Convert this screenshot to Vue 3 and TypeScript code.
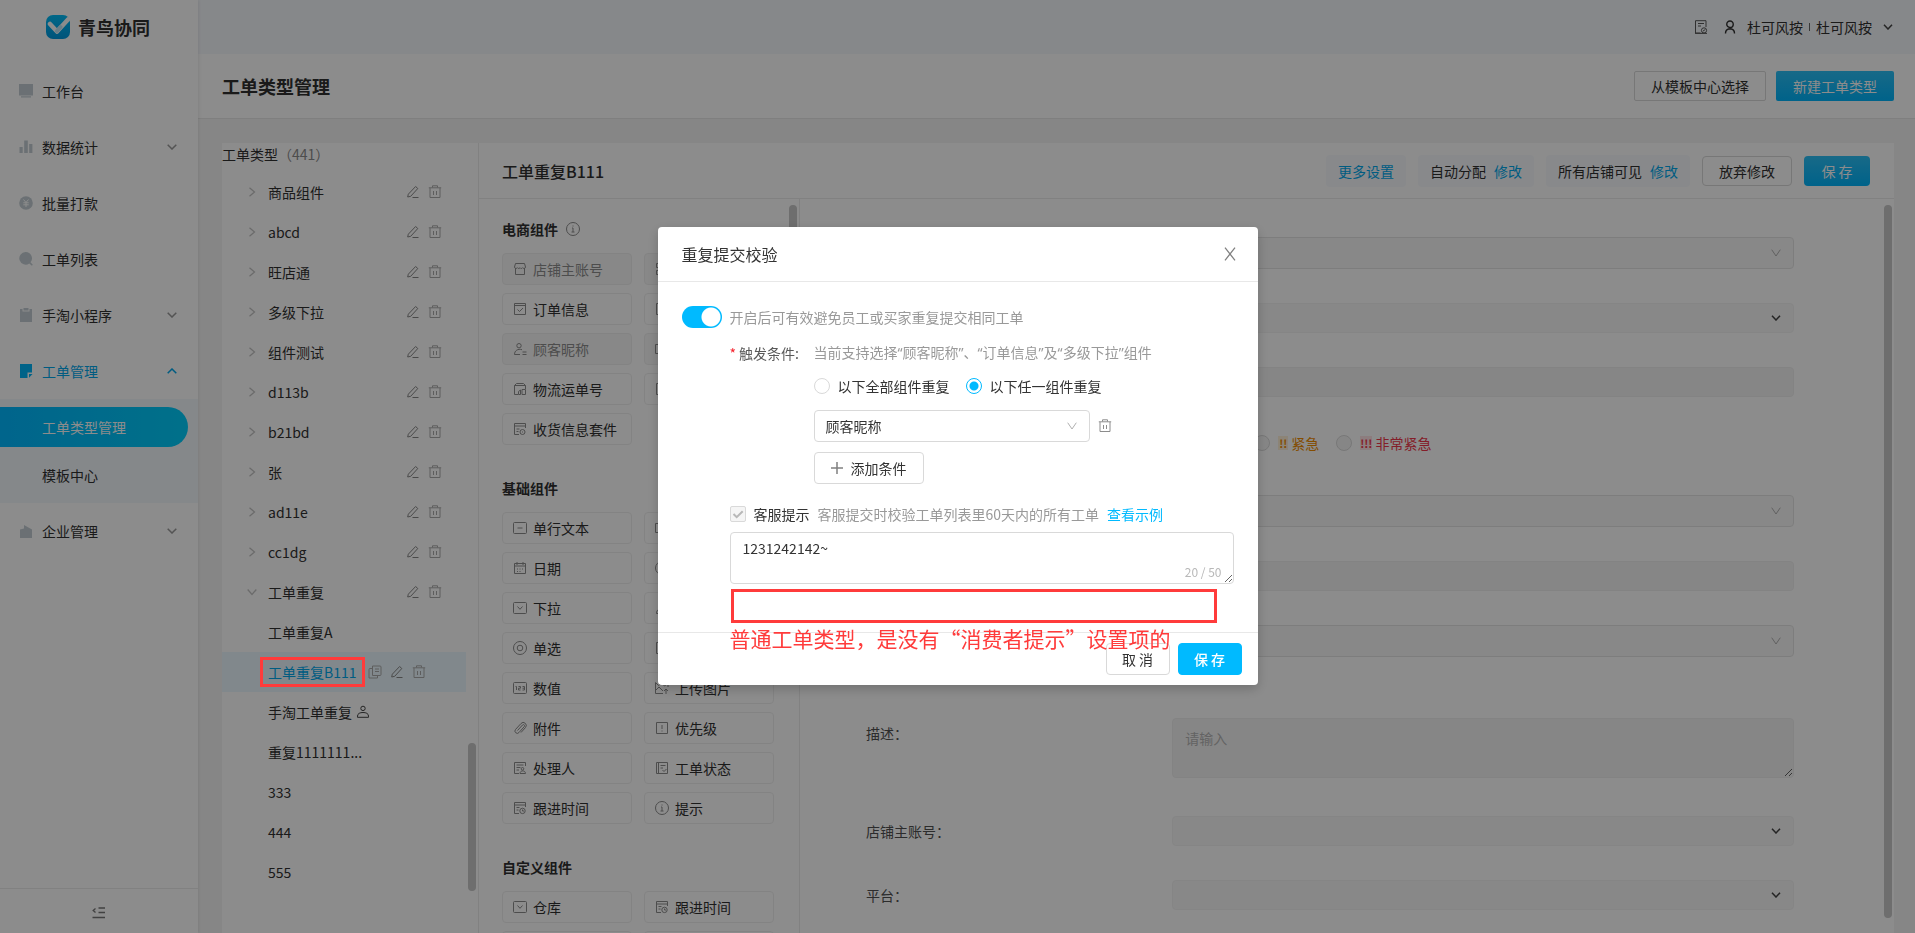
<script setup lang="ts">
import { ref } from 'vue'

interface MenuItem { label: string; icon: string; arrow?: 'down' | 'up'; active?: boolean }
interface TreeRow { label: string; child?: boolean; open?: boolean; selected?: boolean; user?: boolean }
interface Piece { label: string; icon: string; off?: boolean }
interface Group { title: string; info?: boolean; items: Piece[] }
interface Field { label: string; kind: 'select' | 'pick' | 'input' | 'radio' | 'area' }

const menuTop: MenuItem[] = [
  { label: '工作台', icon: 'desk' },
  { label: '数据统计', icon: 'bars', arrow: 'down' },
  { label: '批量打款', icon: 'yen' },
  { label: '工单列表', icon: 'find' },
  { label: '手淘小程序', icon: 'clip', arrow: 'down' },
  { label: '工单管理', icon: 'note', arrow: 'up', active: true },
]

const tree: TreeRow[] = [
  { label: '商品组件' }, { label: 'abcd' }, { label: '旺店通' }, { label: '多级下拉' },
  { label: '组件测试' }, { label: 'd113b' }, { label: 'b21bd' }, { label: '张' },
  { label: 'ad11e' }, { label: 'cc1dg' }, { label: '工单重复', open: true },
  { label: '工单重复A', child: true },
  { label: '工单重复B111', child: true, selected: true },
  { label: '手淘工单重复', child: true, user: true },
  { label: '重复1111111...', child: true },
  { label: '333', child: true }, { label: '444', child: true }, { label: '555', child: true },
]

const groups: Group[] = [
  {
    title: '电商组件', info: true,
    items: [
      { label: '店铺主账号', icon: 'shop', off: true }, { label: '', icon: 'grid', off: true },
      { label: '订单信息', icon: 'order' }, { label: '', icon: 'box' },
      { label: '顾客昵称', icon: 'guest', off: true }, { label: '', icon: 'wide', off: true },
      { label: '物流运单号', icon: 'truck' }, { label: '', icon: 'box' },
      { label: '收货信息套件', icon: 'receive' },
    ],
  },
  {
    title: '基础组件',
    items: [
      { label: '单行文本', icon: 'line' }, { label: '', icon: 'wide' },
      { label: '日期', icon: 'date' }, { label: '', icon: 'radio' },
      { label: '下拉', icon: 'drop' }, { label: '', icon: 'guest' },
      { label: '单选', icon: 'radio' }, { label: '', icon: 'box' },
      { label: '数值', icon: 'num' }, { label: '上传图片', icon: 'image' },
      { label: '附件', icon: 'attach' }, { label: '优先级', icon: 'bang' },
      { label: '处理人', icon: 'handler' }, { label: '工单状态', icon: 'status' },
      { label: '跟进时间', icon: 'follow' }, { label: '提示', icon: 'info' },
    ],
  },
  {
    title: '自定义组件',
    items: [
      { label: '仓库', icon: 'drop' }, { label: '跟进时间', icon: 'follow' },
      { label: '', icon: 'line' }, { label: '', icon: 'line' },
    ],
  },
]

const icons: Record<string, string> = {
  shop: 'M2.500 6v6.500h9V6M2.500 1.500h9l1 3.500a1.500 1.500 0 0 1-2.800.700 1.600 1.600 0 0 1-2.700 0 1.600 1.600 0 0 1-2.700 0A1.500 1.500 0 0 1 1.500 5z',
  grid: 'M1.500 1.500h4v4h-4zM8.500 1.500h4v4h-4zM1.500 8.500h4v4h-4zM8.500 8.500h4v4h-4z',
  box: 'M1.500 1.500h11v11h-11z',
  wide: 'M.5 2.500h13v9H.5z',
  order: 'M1.500 1.500h11v11h-11zM1.500 3.500h11M4.500 7.500l2 2 3.500-3.500',
  guest: 'M6 1.500a2.200 2.200 0 1 1 0 4.400 2.200 2.200 0 0 1 0-4.400zM9 7.700C5 6.500 1.500 8.500 1.500 12.500H7M9.500 10h4M9.500 12.500h4',
  truck: 'M5 12.500H1.500V3.500l2-2h7l2 2V7M1.500 3.500h11M7.500 12.500H5.500V9.500l2-1.500v4.500M9 12.500V7.500h3.500v5z',
  receive: 'M6 12.500H1.500v-11h11V6M1.500 4h11M3.500 7h3M3.500 9.500h2M9.500 7.500a2.500 2.500 0 1 1 0 5 2.500 2.500 0 0 1 0-5zM9.500 9.500v1',
  line: 'M1.500 1.500h11a1 1 0 0 1 1 1v9a1 1 0 0 1-1 1h-11a1 1 0 0 1-1-1v-9a1 1 0 0 1 1-1zM4.500 7h5',
  date: 'M1.500 2.500h11v10h-11zM1.500 5h11M4 1v3M10 1v3M4 8h1M6.500 8h1M9 8h1M4 10.500h1M6.500 10.500h1',
  drop: 'M1.500 1.500h11a1 1 0 0 1 1 1v9a1 1 0 0 1-1 1h-11a1 1 0 0 1-1-1v-9a1 1 0 0 1 1-1zM4.500 5.500L7 8.300 9.500 5.500',
  radio: 'M7 .5a6.500 6.500 0 1 1 0 13 6.500 6.500 0 0 1 0-13zM7 4.200a2.800 2.800 0 1 1 0 5.600 2.800 2.800 0 0 1 0-5.600z',
  num: 'M1.500 1.500h11a1 1 0 0 1 1 1v9a1 1 0 0 1-1 1h-11a1 1 0 0 1-1-1v-9a1 1 0 0 1 1-1zM2.500 5.500h1v3.500M5.500 5.500h2v1.700h-2V9h2M9.500 5.500h2V9h-2M9.500 7.200h2',
  image: 'M8 12.500H.5v-11l3 3 3-2.500 3 3 3.500-3V6M.5 9.500L4 6l4 4M11 13V8M9 10l2-2 2 2',
  attach: 'M4.500 9.500l5-5.500a1.200 1.200 0 0 1 1.800 1.600L6 11.500a2.300 2.300 0 0 1-3.500-3L8 2.500a3 3 0 0 1 4.500 4L8 11.500',
  bang: 'M1.500 1.500h11v11h-11zM7 4v4M7 9.500v1',
  handler: 'M6 12.500H1.500v-11h11V5M3.500 4h7M3.500 6.500h4M3.500 9h2.500M9.500 6.500a1.300 1.300 0 1 1 0 2.600 1.300 1.300 0 0 1 0-2.600zM7 12.500c0-3.500 5.500-3.500 5.500 0z',
  status: 'M1.500 1.500h11v11h-11zM3.500 1.500v11M5.500 4.500h5M5.500 7h2.500M7.500 9l1.500 1.500L11.500 8',
  follow: 'M6 12.500H1.500v-11h11V6M1.500 4h11M3.500 6.500h3M3.500 9h2M9.500 7.200a2.700 2.700 0 1 1 0 5.400 2.700 2.700 0 0 1 0-5.400zM9.500 8.500V10h1.500',
  info: 'M7 .5a6.500 6.500 0 1 1 0 13 6.500 6.500 0 0 1 0-13zM7 3.500v1M6 6h1v4M5.500 10h3',
  edit: 'M2.300 9.200L9.600 1.500l2.200 2L4.700 11.300l-3 .7zM6.500 12.500h6',
  trash: 'M.8 2.800h12.400M4.500 2.500V.8h5v1.700M2 3v9.500h10V3M5.500 6v4M8.500 6v4',
  copy: 'M4.500 1h7.500a1 1 0 0 1 1 1v7.500a1 1 0 0 1-1 1H4.500zM4.500 3.500H2a1 1 0 0 0-1 1V13h8.500v-2.500M7 4h4M7 6.500h4',
  user: 'M7 1.200a2.200 2.200 0 1 1 0 4.400 2.200 2.200 0 0 1 0-4.400zM1.500 12.300v-1.200C1.500 8.500 4 7.500 7 7.500s5.500 1 5.500 3.600v1.200z',
}

const fields: Field[] = [
  { label: '', kind: 'select' },
  { label: '', kind: 'pick' },
  { label: '', kind: 'input' },
  { label: '', kind: 'radio' },
  { label: '', kind: 'select' },
  { label: '', kind: 'input' },
  { label: '', kind: 'select' },
  { label: '描述', kind: 'area' },
  { label: '店铺主账号', kind: 'pick' },
  { label: '平台', kind: 'pick' },
]

const enabled = ref(true)
const mode = ref('any')
const tip = ref('1231242142~')
</script>

<template>
  <div class="page">
    <aside class="side">
      <div class="logo">
        <svg width="24" height="24" viewBox="0 0 24 24">
          <defs>
            <linearGradient id="lg" x1="0" y1="0" x2="0" y2="1">
              <stop offset="0" stop-color="#00bdf7" /><stop offset="1" stop-color="#0099df" />
            </linearGradient>
          </defs>
          <rect width="24" height="24" rx="7" fill="url(#lg)" />
          <path d="M4 9l7 7.500L22 4.500" fill="none" stroke="#fff" stroke-width="4.500" stroke-linecap="round" stroke-linejoin="round" />
          <path d="M11 16l3.500-4" stroke="#bfe6f8" stroke-width="4" stroke-linecap="round" />
        </svg>
        <strong>青鸟协同</strong>
      </div>
      <nav class="menu">
        <a v-for="m in menuTop" :key="m.label" href="#" class="item" :class="{ on: m.active }">
          <svg class="mico" viewBox="0 0 14 14">
            <path v-if="m.icon === 'desk'" d="M0 0h14v11.500H0zM2 12.200h10v1.300H2z" />
            <path v-else-if="m.icon === 'bars'" d="M.5 7h3.200v6H.5zM5.200.5h3.600V13H5.200zM10.200 4h3.200v9h-3.200z" />
            <g v-else-if="m.icon === 'yen'">
              <circle cx="7" cy="7" r="6.800" />
              <path d="M4.500 3.500L7 6.500l2.500-3M4.300 6.800h5.400M4.300 8.800h5.400M7 6.500v4.500" class="cut" />
            </g>
            <path v-else-if="m.icon === 'find'" d="M6.500 0a6.300 6.300 0 0 1 5 10.300l2.300 2.500-.9.900-2.600-2.300A6.300 6.300 0 1 1 6.500 0z" />
            <path v-else-if="m.icon === 'clip'" d="M1 1h2.500v2.500h7V1H13v13H1zM4.500 0h5v2.500h-5z" />
            <path v-else d="M1 0h12v8.500H8.500V14H1zM10 10h3.500L10 13.800z" />
          </svg>
          <span>{{ m.label }}</span>
          <svg v-if="m.arrow" class="arrow" viewBox="0 0 10 6">
            <path :d="m.arrow === 'down' ? 'M.7.7L5 5 9.300.7' : 'M.7 5.300L5 1l4.300 4.300'" />
          </svg>
        </a>
        <div class="sub">
          <a href="#" class="leaf cur">工单类型管理</a>
          <a href="#" class="leaf">模板中心</a>
        </div>
        <a href="#" class="item">
          <svg class="mico" viewBox="0 0 14 14"><path d="M1 5.500l4-1V1l8 4.500V14H1z" /></svg>
          <span>企业管理</span>
          <svg class="arrow" viewBox="0 0 10 6"><path d="M.7.7L5 5 9.300.7" /></svg>
        </a>
      </nav>
      <button class="fold" aria-label="收起">
        <svg width="14" height="12" viewBox="0 0 14 12"><path d="M6.500 1H13M6.500 5.500H13M.5 10.500H13M3.500 1.500L1.200 3.500l2.300 2" /></svg>
      </button>
    </aside>

    <div class="main">
      <header class="top">
        <svg class="line-ico" width="14" height="14" viewBox="0 0 14 14">
          <path d="M6.500 13H1.500V.7h10.500V7M4 3.500h6M4 6h3M10 7.800a2.600 2.600 0 1 1 0 5.200 2.600 2.600 0 0 1 0-5.200zM8.800 11.200L11.300 9.500M1 13.400h12" />
        </svg>
        <svg class="line-ico dark" width="12" height="14" viewBox="0 0 12 14">
          <path d="M6 1a3.200 3.200 0 1 1 0 6.500A3.200 3.200 0 0 1 6 1zM1.500 13.500C1.500 11 2.500 9.500 4.500 9h3c2 .5 3 2 3 4.500" />
        </svg>
        <span class="who">杜可风按<i></i>杜可风按</span>
        <svg class="arrow dark" viewBox="0 0 10 6"><path d="M1 .7L5 5 9 .7" /></svg>
      </header>

      <div class="bar">
        <h1>工单类型管理</h1>
        <button class="btn sq">从模板中心选择</button>
        <button class="btn blue sq">新建工单类型</button>
      </div>

      <div class="body">
        <section class="types">
          <h2>工单类型<span>（441）</span></h2>
          <ul>
            <li v-for="t in tree" :key="t.label" :class="{ sel: t.selected }">
              <svg v-if="!t.child" class="tri" :class="{ open: t.open }" viewBox="0 0 10 10"><path d="M2.500.7L7.500 5 2.500 9.300" /></svg>
              <span class="name">{{ t.label }}<i v-if="t.selected" class="mark"></i></span>
              <svg v-if="t.user" class="ico who-ico" viewBox="0 0 14 14"><path :d="icons.user" /></svg>
              <span v-if="!t.child || t.selected" class="acts">
                <svg v-if="t.selected" class="ico" viewBox="0 0 14 14"><path :d="icons.copy" /></svg>
                <svg class="ico pen" viewBox="0 0 14 14"><path :d="icons.edit" /></svg>
                <svg class="ico" viewBox="0 0 14 14"><path :d="icons.trash" /></svg>
              </span>
            </li>
          </ul>
          <i class="thumb t1"></i>
        </section>

        <section class="work">
          <div class="whead">
            <h2>工单重复B111</h2>
            <span class="tag"><a href="#">更多设置</a></span>
            <span class="tag">自动分配<a href="#">修改</a></span>
            <span class="tag">所有店铺可见<a href="#">修改</a></span>
            <button class="btn">放弃修改</button>
            <button class="btn blue wide">保 存</button>
          </div>
          <div class="cols">
            <div class="parts">
              <div v-for="g in groups" :key="g.title" class="group">
                <h3>{{ g.title }}<svg v-if="g.info" class="ico" viewBox="0 0 14 14"><path :d="icons.info" /></svg></h3>
                <div class="tiles">
                  <button v-for="(p, i) in g.items" :key="i" class="tile" :class="{ off: p.off }">
                    <svg class="ico" viewBox="0 0 14 14"><path :d="icons[p.icon]" /></svg>{{ p.label }}
                  </button>
                </div>
              </div>
              <i class="thumb t2"></i>
            </div>
            <form class="form" @submit.prevent>
              <div v-for="(f, i) in fields" :key="i" class="frow" :class="f.kind">
                <label :for="'f' + i"><template v-if="f.label">{{ f.label }}：</template></label>
                <div v-if="f.kind === 'select' || f.kind === 'pick'" class="pickbox">
                  <select :id="'f' + i" disabled></select>
                  <svg v-if="f.kind === 'select'" class="v" viewBox="0 0 10 8"><path d="M.7.7L5 7 9.300.7" /></svg>
                  <svg v-else class="arrow dark" viewBox="0 0 10 6"><path d="M1 .7L5 5 9 .7" /></svg>
                </div>
                <input v-else-if="f.kind === 'input'" :id="'f' + i" type="text" disabled>
                <textarea v-else-if="f.kind === 'area'" :id="'f' + i" placeholder="请输入" disabled></textarea>
                <div v-else class="levels">
                  <label><input type="radio" name="lv" disabled><span><b>!</b>普通</span></label>
                  <label class="warn"><input type="radio" name="lv" disabled><span><b>!!</b>紧急</span></label>
                  <label class="hot"><input type="radio" name="lv" disabled><span><b>!!!</b>非常紧急</span></label>
                </div>
              </div>
              <i class="thumb t3"></i>
            </form>
          </div>
        </section>
      </div>
    </div>

    <div class="mask">
      <div class="modal" role="dialog" aria-labelledby="mt">
        <div class="mhead">
          <h2 id="mt">重复提交校验</h2>
          <button class="close" aria-label="关闭">
            <svg width="12" height="14" viewBox="0 0 12 14"><path d="M1 .7l10 12.600M11 .7L1 13.300" /></svg>
          </button>
        </div>
        <div class="mbody">
          <label class="switch">
            <input v-model="enabled" type="checkbox" role="switch"><span>开启后可有效避免员工或买家重复提交相同工单</span>
          </label>
          <div class="inner">
            <div class="cond">
              <span class="req">触发条件:</span>
              <div>
                <p class="hint">当前支持选择“顾客昵称”、“订单信息”及“多级下拉”组件</p>
                <div class="radios">
                  <label><input v-model="mode" type="radio" value="all">以下全部组件重复</label>
                  <label><input v-model="mode" type="radio" value="any">以下任一组件重复</label>
                </div>
                <div class="choose">
                  <div class="pickbox">
                    <select aria-label="触发条件"><option>顾客昵称</option></select>
                    <svg class="v" viewBox="0 0 10 8"><path d="M.7.7L5 7 9.300.7" /></svg>
                  </div>
                  <svg class="ico" viewBox="0 0 14 14"><path :d="icons.trash" /></svg>
                </div>
                <button class="btn add">
                  <svg width="12" height="12" viewBox="0 0 12 12"><path d="M6 0v12M0 6h12" /></svg>添加条件
                </button>
              </div>
            </div>
            <div class="tipline">
              <label class="tick">
                <span class="boxed"><input type="checkbox" checked disabled><svg viewBox="0 0 16 16"><path d="M3.500 8l3.200 3.200 6-6" /></svg></span>客服提示
              </label>
              <span class="gray">客服提交时校验工单列表里60天内的所有工单</span>
              <a href="#">查看示例</a>
            </div>
            <div class="tip">
              <textarea v-model="tip" aria-label="客服提示"></textarea>
              <span>20 / 50</span>
              <i class="frame"></i>
              <p class="note">普通工单类型，是没有“消费者提示”设置项的</p>
            </div>
          </div>
        </div>
        <div class="mfoot">
          <button class="btn">取 消</button>
          <button class="btn solid">保 存</button>
        </div>
      </div>
    </div>
  </div>
</template>

<style>
body { margin: 0; }
</style>

<style scoped>
* { box-sizing: border-box; }
.page {
  display: flex;
  height: 100vh;
  overflow: hidden;
  color: #303030;
  font: 14px/22px "Noto Sans CJK SC", "Noto Sans", sans-serif;
}
a { color: #00a8ec; text-decoration: none; }
h1, h2, h3, ul, p { margin: 0; padding: 0; }
ul { list-style: none; }
i { font-style: normal; }
svg { flex: none; }
button, input, select, textarea { font: inherit; color: inherit; }
select { appearance: none; }
.arrow { width: 10px; height: 6px; fill: none; stroke: #999; stroke-width: 1.500; }
.arrow.dark { stroke: #444; }
.ico { width: 14px; height: 14px; fill: none; stroke: #8c8c8c; stroke-width: 1; }

.side {
  display: flex;
  flex-direction: column;
  flex: none;
  width: 198px;
  background: #fff;
  box-shadow: 1px 0 3px rgba(0, 0, 0, .08);
  z-index: 1;
}
.logo { display: flex; align-items: center; gap: 8px; height: 54px; padding-left: 46px; }
.logo strong { font-size: 18px; line-height: 24px; }
.menu { flex: 1; padding-top: 9px; }
.item { display: flex; align-items: center; height: 56px; padding: 0 21px 0 19px; color: #303030; }
.item span { flex: 1; }
.mico { width: 14px; height: 14px; margin-right: 9px; fill: #c3cdd3; }
.cut { fill: none; stroke: #fff; }
.item.on { color: #00a8ec; }
.item.on .mico { fill: #00b4f8; }
.item.on .arrow { stroke: #00a8ec; }
.sub { padding: 8px 0; height: 104px; background: #f3f7fc; }
.leaf { display: block; height: 40px; margin: 0 10px 8px 0; padding-left: 42px; line-height: 40px; color: #303030; border-radius: 0 20px 20px 0; }
.leaf.cur { color: #fff; background: linear-gradient(90deg, #00b8ff, #00cdfb); }
.fold { height: 45px; padding: 4px 0 0; border: 0; border-top: 1px solid #ececec; background: none; }
.fold svg { fill: none; stroke: #777; stroke-width: 1.300; }

.main { display: flex; flex: 1; flex-direction: column; min-width: 0; background: #f5f5f5; }
.top { display: flex; flex: none; align-items: center; justify-content: flex-end; height: 54px; padding-right: 22px; background: #f5f8fc; }
.line-ico { margin-right: 16px; fill: none; stroke: #595959; }
.line-ico.dark { margin-right: 11px; stroke: #303030; stroke-width: 1.400; }
.who { display: flex; align-items: center; margin-right: 11px; }
.who i { width: 1px; height: 8px; margin: 0 6px; background: #666; }
.bar { display: flex; flex: none; align-items: center; gap: 10px; height: 65px; padding: 0 21px 0 24px; background: #fff; border-bottom: 1px solid #e8e8e8; }
.bar h1 { flex: 1; font-size: 18px; line-height: 26px; }
.btn { height: 30px; padding: 0 16px; border: 1px solid #d9d9d9; border-radius: 4px; background: #fff; line-height: 22px; white-space: nowrap; }
.btn.sq { border-radius: 2px; }
.btn.blue { padding: 0 17px; border: 0; color: #fff; background: linear-gradient(#2cc0f6, #00b4fb); }

.body { display: flex; flex: 1; min-height: 0; padding: 24px 21px 0 24px; }
.types { position: relative; flex: none; width: 257px; background: #fff; border-right: 1px solid #ececec; }
.types h2 { margin-bottom: 7px; font-size: 14px; font-weight: 400; line-height: 22px; }
.types h2 span { color: #8c8c8c; }
.types li { position: relative; display: flex; align-items: center; height: 40px; margin-right: 12px; padding: 0 24px 0 46px; }
.types li.sel { color: #00a8ec; background: #ebf8ff; }
.tri { position: absolute; left: 25px; width: 10px; height: 10px; fill: none; stroke: #c4c4c4; stroke-width: 1.300; }
.tri.open { transform: rotate(90deg); }
.name { position: relative; }
.mark { position: absolute; z-index: 20; inset: -4px -8px; border: 3px solid #ff3b3b; }
.acts { display: flex; gap: 8px; margin-left: auto; }
.sel .acts { margin-right: 16px; }
.acts .ico { stroke: #aaa; }
.acts .pen { stroke: #888; }
.types .who-ico { margin-left: 4px; stroke: #444; }
.thumb { position: absolute; width: 8px; border-radius: 4px; background: #c8c8c8; }
.t1 { top: 600px; right: 2px; height: 148px; }
.t2 { top: 6px; right: 2px; height: 300px; }
.t3 { top: 6px; right: 2px; bottom: 15px; }

.work { display: flex; flex: 1; flex-direction: column; min-width: 0; background: #fff; }
.whead { display: flex; flex: none; align-items: center; gap: 12px; height: 56px; padding: 0 24px 0 23px; border-bottom: 1px solid #ececec; }
.whead h2 { flex: 1; font-size: 16px; font-weight: 500; line-height: 24px; }
.tag { display: flex; gap: 8px; padding: 5px 12px; border-radius: 4px; background: #f7fafd; }
.btn.wide { width: 66px; }
.cols { display: flex; flex: 1; min-height: 0; }
.parts { position: relative; flex: none; width: 321px; padding: 19px 25px 0 23px; overflow: hidden; border-right: 1px solid #ececec; }
.group { margin-bottom: 32px; }
.group h3 { display: flex; align-items: center; gap: 8px; margin-bottom: 13px; font-size: 14px; line-height: 22px; font-weight: 700; }
.tiles { display: grid; grid-template-columns: 1fr 1fr; gap: 8px 12px; }
.tile { display: flex; align-items: center; gap: 6px; height: 32px; padding: 0 10px; border: 1px solid #efefef; border-radius: 4px; background: #fff; white-space: nowrap; }
.tile.off { color: #8c8c8c; background: #f8f8f8; }

.form { position: relative; flex: 1; min-width: 0; padding: 38px 100px 0 66px; overflow: hidden; }
.frow { display: grid; grid-template-columns: 33% 1fr; align-items: start; margin-bottom: 34px; line-height: 30px; color: #505050; }
.frow:nth-child(7) { margin-bottom: 61px; }
.frow.area { margin-bottom: 38px; }
.pickbox { position: relative; display: flex; align-items: center; }
.pickbox select { width: 100%; height: 30px; border: 1px solid #efefef; border-radius: 4px; background: #f5f5f5; }
.frow.select select { height: 32px; border-color: #d9d9d9; }
.pickbox svg { position: absolute; right: 13px; }
.v { width: 10px; height: 8px; fill: none; stroke: #b0b0b0; }
.frow > input, .frow textarea { width: 100%; height: 30px; border: 1px solid #efefef; border-radius: 4px; background: #f5f5f5; }
.frow textarea { display: block; height: 60px; padding: 8px 12px; line-height: 22px; }
.frow textarea::placeholder { color: #b4b4b4; }
.levels { display: flex; gap: 17px; height: 30px; }
.levels label { display: flex; align-items: center; gap: 8px; height: 24px; }
.levels span { display: flex; gap: 3px; line-height: 22px; }
.levels b { min-width: 10px; height: 14px; margin-top: 4px; font-size: 11px; line-height: 14px; text-align: center; }
.warn { color: #f08c00; }
.warn b { background: #fff0d9; }
.hot { color: #f0384b; }
.hot b { background: #ffe3e6; }
input[type="radio"] { appearance: none; width: 16px; height: 16px; margin: 0; border: 1px solid #d9d9d9; border-radius: 50%; background: #fff; }
.levels input[type="radio"] { background: #f5f5f5; }

.mask { position: fixed; inset: 0; z-index: 10; display: flex; align-items: center; justify-content: center; padding-bottom: 21px; background: rgba(0, 0, 0, .45); }
.modal { width: 600px; border-radius: 4px; background: #fff; box-shadow: 0 4px 12px rgba(0, 0, 0, .2); color: #333; }
.mhead { display: flex; align-items: center; justify-content: space-between; height: 55px; padding: 0 22px 0 24px; border-bottom: 1px solid #e8e8e8; }
.mhead h2 { font-size: 16px; font-weight: 400; line-height: 24px; }
.close { height: 22px; padding: 4px 0; border: 0; background: none; line-height: 0; }
.close svg { fill: none; stroke: #808080; stroke-width: 1.300; }
.mbody { padding: 24px 24px 48px; }
.switch { display: flex; align-items: center; gap: 8px; height: 22px; color: #999; }
.switch input { appearance: none; width: 40px; height: 22px; margin: 0; border-radius: 11px; background: radial-gradient(circle at 29px 11px, #fff 9px, transparent 10px) #00baff; }
.inner { padding: 14px 0 0 48px; }
.cond { display: flex; gap: 12px; }
.req { width: 72px; color: #595959; white-space: nowrap; }
.req::before { content: "*"; margin-right: 3px; color: #f5222d; }
.hint { font-family: "Noto Sans", "Noto Sans CJK SC", sans-serif; color: #999; }
.radios { display: flex; gap: 16px; margin: 11px 0 13px; }
.radios label { display: flex; align-items: center; gap: 8px; }
.radios input:checked { border-color: #00baff; background: radial-gradient(circle, #00baff 4px, transparent 5px); }
.choose { display: flex; align-items: center; gap: 8px; margin-bottom: 10px; }
.choose .pickbox { width: 276px; }
.choose select { height: 32px; padding: 0 11px; border-color: #d9d9d9; background: #fff; }
.btn.add { display: flex; align-items: center; gap: 8px; height: 32px; padding: 0 16px; border-color: #d9d9d9; }
.add svg { stroke: #808080; stroke-width: 1.500; }
.tipline { display: flex; gap: 8px; margin: 19px 0 7px; white-space: nowrap; }
.tipline a { color: #00baff; }
.tick { display: flex; align-items: center; gap: 8px; }
.boxed { position: relative; width: 16px; height: 16px; }
.boxed input { appearance: none; display: block; width: 16px; height: 16px; margin: 0; border: 1px solid #d9d9d9; border-radius: 2px; background: #f5f5f5; }
.boxed svg { position: absolute; inset: 0; fill: none; stroke: #b8b8b8; stroke-width: 2; }
.gray { color: #999; }
.tip { position: relative; }
.tip textarea { display: block; width: 100%; height: 52px; padding: 4px 12px; border: 1px solid #d9d9d9; border-radius: 4px; background: #fff; }
.tip span { position: absolute; right: 12px; bottom: 2px; font-size: 12px; line-height: 20px; color: #b8b8b8; }
.frame { position: absolute; top: 57px; left: 1px; right: 17px; height: 34px; border: 3px solid #ff3b3b; }
.note { position: absolute; z-index: 1; top: 91px; left: 0; font-size: 21px; line-height: 30px; color: #ff3b3b; white-space: nowrap; }
.mfoot { display: flex; justify-content: flex-end; gap: 8px; padding: 10px 16px; border-top: 1px solid #e8e8e8; }
.mfoot .btn { width: 64px; height: 32px; padding: 0; border-color: #d9d9d9; }
.mfoot .btn.solid { border-color: #00baff; color: #fff; font-weight: 500; background: #00baff; }
</style>
